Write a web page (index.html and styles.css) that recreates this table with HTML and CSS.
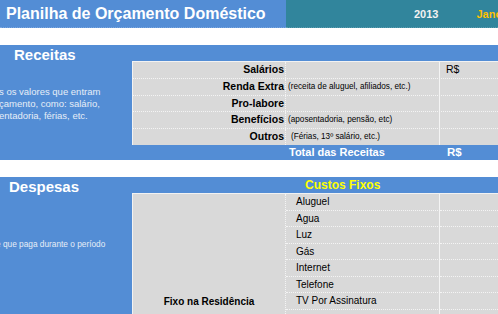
FILE: index.html
```html
<!DOCTYPE html>
<html lang="pt">
<head>
<meta charset="utf-8">
<title>Planilha de Orçamento Doméstico</title>
<link rel="stylesheet" href="styles.css">
</head>
<body>
<div class="page">
  <header class="topbar">
    <div class="title">Planilha de Orçamento Doméstico</div>
    <div class="period"><span class="year">2013</span><span class="month">Janeiro</span></div>
  </header>
  <div class="spacer"></div>
  <section class="block receitas">
    <div class="side">
      <h2 class="heading">Receitas</h2>
      <p class="hint"><span>s os valores que entram</span><span>çamento, como: salário,</span><span>entadoria, férias, etc.</span></p>
    </div>
    <div class="main">
      <div class="head"></div>
      <div class="table">
        <div class="row"><div class="label">Salários</div><div class="mid"></div><div class="val">R$</div></div>
        <div class="row"><div class="label">Renda Extra</div><div class="mid note">(receita de aluguel, afiliados, etc.)</div><div class="val"></div></div>
        <div class="row"><div class="label">Pro-labore</div><div class="mid"></div><div class="val"></div></div>
        <div class="row"><div class="label">Benefícios</div><div class="mid note">(aposentadoria, pensão, etc)</div><div class="val"></div></div>
        <div class="row"><div class="label">Outros</div><div class="mid note indent">(Férias, 13º salário, etc.)</div><div class="val"></div></div>
      </div>
      <div class="total"><span></span><span class="total-label">Total das Receitas</span><span class="total-val">R$</span></div>
    </div>
  </section>
  <div class="spacer"></div>
  <section class="block despesas">
    <div class="side">
      <h2 class="heading">Despesas</h2>
      <p class="hint hint2"><span>e que paga durante o período</span></p>
    </div>
    <div class="main">
      <div class="head"><span class="subhead">Custos Fixos</span></div>
      <div class="grid">
        <div class="group">Fixo na Residência</div>
        <div class="item">Aluguel</div><div class="val"></div>
        <div class="item">Agua</div><div class="val"></div>
        <div class="item">Luz</div><div class="val"></div>
        <div class="item">Gás</div><div class="val"></div>
        <div class="item">Internet</div><div class="val"></div>
        <div class="item">Telefone</div><div class="val"></div>
        <div class="item">TV Por Assinatura</div><div class="val"></div>
        <div class="item"></div><div class="val"></div>
      </div>
    </div>
  </section>
</div>
</body>
</html>
```
FILE: styles.css
```css
* { box-sizing: border-box; margin: 0; padding: 0; }
html, body { width: 498px; height: 314px; overflow: hidden; background: #fff; }
body { font-family: "Liberation Sans", Arial, sans-serif; color: #000; }
.page { width: 640px; }

.topbar { display: flex; height: 28px; }
.title {
  width: 286px; background: #538dd5; color: #fff; font-weight: bold;
  font-size: 16px; line-height: 18px; padding: 5px 0 0 6px; white-space: nowrap;
  border-bottom: 1px dotted #7aa6e0;
}
.period {
  flex: 1; background: #31859c; display: flex; align-items: flex-start;
  font-weight: bold; font-size: 11px; line-height: 13px; padding-top: 8px;
  border-bottom: 1px dotted #5a9db0;
}
.year { color: #f2f2f2; margin-left: 128px; }
.month { color: #ffc000; margin-left: 38px; }

.spacer { height: 17px; }

.block { display: grid; grid-template-columns: 132px 1fr; background: #538dd5; }
.receitas { height: 115px; }
.despesas { height: 140px; }

.side { overflow: hidden; }
.heading { color: #fff; font-size: 15px; line-height: 17px; font-weight: bold; }
.receitas .heading { padding: 1px 0 0 14px; }
.despesas .heading { padding: 1px 0 0 9px; }
.hint {
  display: flex; flex-direction: column; color: #e6edf7;
  font-size: 9.5px; line-height: 12px; white-space: nowrap; margin-left: -1px;
}
.receitas .hint { margin-top: 23px; }
.despesas .hint { margin-top: 43px; margin-left: -4px; font-size: 8.3px; }

.head { height: 16px; }
.subhead {
  display: block; color: #ffff00; font-weight: bold; font-size: 12px; line-height: 16px;
  padding-left: 173px;
}

.table { border-top: 1px solid #f2f2f2; border-left: 1px solid #f2f2f2; }
.row {
  display: grid; grid-template-columns: 153px 154px 1fr; height: 16.8px;
  background: #d9d9d9; border-top: 1px dotted #f4f4f4; font-size: 10px;
}
.row:first-child { border-top: none; height: 15.8px; }
.label {
  text-align: right; font-weight: bold; padding-right: 1px;
  border-right: 1px dotted #f4f4f4; line-height: 15px; font-size: 10.5px;
}
.mid { border-right: 1px solid #f4f4f4; line-height: 15px; padding-left: 2px; }
.note { font-size: 8.2px; }
.indent { padding-left: 5px; }
.val { padding-left: 6px; line-height: 15px; font-size: 10.5px; }

.total {
  display: grid; grid-template-columns: 154px 154px 1fr; height: 15px;
  color: #fff; font-weight: bold; font-size: 11px; line-height: 15px;
}
.total-label { padding-left: 3px; }
.total-val { padding-left: 7px; font-size: 11.5px; }

.grid {
  display: grid; grid-template-columns: 153px 154px 1fr; grid-auto-rows: 16.5px;
  border-top: 1px solid #f2f2f2; border-left: 1px solid #f2f2f2; background: #d9d9d9;
  font-size: 10px;
}
.group {
  grid-row: 1 / span 8; grid-column: 1; border-right: 1px dotted #f4f4f4;
  display: flex; align-items: flex-end; justify-content: center;
  font-weight: bold; padding-bottom: 19px; font-size: 10px;
}
.item {
  grid-column: 2; padding-left: 10px; line-height: 15px;
  border-right: 1px solid #f4f4f4; border-bottom: 1px dotted #f4f4f4;
}
.grid .val { grid-column: 3; border-bottom: 1px dotted #f4f4f4; }
```
